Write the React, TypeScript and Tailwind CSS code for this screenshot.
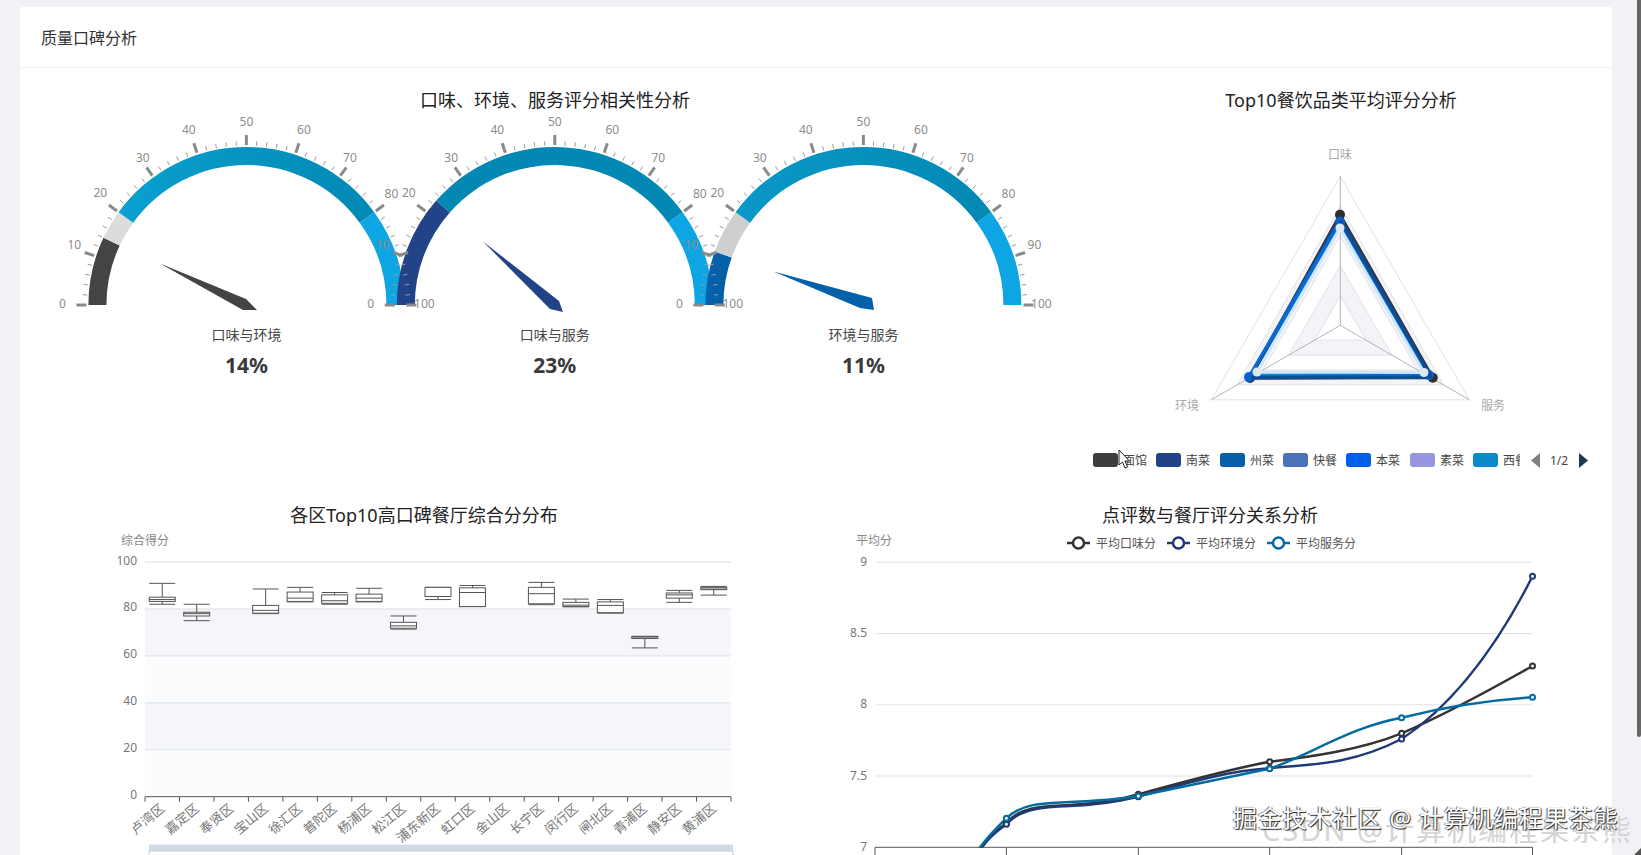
const FONT = "font-['Noto_Sans','Noto_Sans_CJK_SC',sans-serif]";

const pt = (cx: number, cy: number, r: number, v: number): [number, number] => {
  const a = Math.PI * (1 - v / 100);
  return [cx + r * Math.cos(a), cy - r * Math.sin(a)];
};

const arc = (cx: number, cy: number, from: number, to: number) => {
  const [x1, y1] = pt(cx, cy, 158, from);
  const [x2, y2] = pt(cx, cy, 158, to);
  const [x3, y3] = pt(cx, cy, 140, to);
  const [x4, y4] = pt(cx, cy, 140, from);
  return `M${x1} ${y1}A158 158 0 0 1 ${x2} ${y2}L${x3} ${y3}A140 140 0 0 0 ${x4} ${y4}Z`;
};

const CY = 305;

const gauges = [
  {
    cx: 246.4,
    value: 14,
    name: '口味与环境',
    color: '#444444',
    mid: '#dcdcdc',
    main: 'url(#gauge1)',
    needle: '160,263.5 246,299 257,310 243,310',
    hide90: true,
  },
  {
    cx: 554.8,
    value: 23,
    name: '口味与服务',
    color: '#234389',
    mid: '#234389',
    main: '#0288b3',
    needle: '483,241.5 559,301 563,312 550,309',
    hide90: true,
  },
  {
    cx: 863.4,
    value: 11,
    name: '环境与服务',
    color: '#0460a9',
    mid: '#cfcfcf',
    main: 'url(#gauge3)',
    needle: '773.5,271.5 872,298 874,310 860,308',
    hide90: false,
  },
];

const allTicks = Array.from({ length: 51 }, (_, i) => i * 2);

// nudges for the axis numbers, value -> dx, dy
const labelNudge: Record<number, [number, number]> = {
  0: [-1, -2],
  10: [2, -4],
  20: [2, -5],
  30: [4, 1],
  40: [-1, -1],
  50: [0, -1],
  60: [1, -1],
  70: [-4, 1],
  80: [-3, -4],
  90: [-3, -4],
  100: [-5, -2],
};

function Gauges() {
  return (
    <svg className="block" width={1070} height={377} viewBox="20 113 1070 377">
      <defs>
        <linearGradient id="gauge1" gradientUnits="userSpaceOnUse" x1="119" y1="0" x2="371" y2="0">
          <stop offset="0" stopColor="#0aa0d0" />
          <stop offset="1" stopColor="#0288b3" />
        </linearGradient>
        <linearGradient id="gauge3" gradientUnits="userSpaceOnUse" x1="736" y1="0" x2="990" y2="0">
          <stop offset="0" stopColor="#0a98c8" />
          <stop offset="1" stopColor="#0288b3" />
        </linearGradient>
      </defs>
      {gauges.map((g) => (
        <g key={g.name}>
          <path d={arc(g.cx, CY, 0, g.value)} fill={g.color} />
          {g.value < 20 && <path d={arc(g.cx, CY, g.value, 20)} fill={g.mid} />}
          <path d={arc(g.cx, CY, Math.max(20, g.value), 80)} fill={g.main} />
          <path d={arc(g.cx, CY, 80, 100)} fill="#0ea5e4" />
        </g>
      ))}
      {gauges.map((g) => (
        <g key={g.name}>
          {allTicks.map((v) => {
            const major = v % 10 === 0;
            const [x1, y1] = pt(g.cx, CY, major ? 160 : 159.5, v);
            const [x2, y2] = pt(g.cx, CY, major ? 170 : 164, v);
            return (
              <line
                key={v}
                x1={x1}
                y1={y1}
                x2={x2}
                y2={y2}
                stroke={major ? '#8a8a8a' : '#9a9a9a'}
                strokeWidth={major ? 3 : 1}
              />
            );
          })}
          {Array.from({ length: 11 }, (_, i) => i * 10).map((v) => {
            if (v === 90 && g.hide90) return null;
            const [x, y] = pt(g.cx, CY, 183, v);
            const [dx, dy] = labelNudge[v];
            return (
              <text key={v} x={x + dx} y={y + dy} fontSize={12} fill="#8c8c8c" textAnchor="middle" dominantBaseline="central">
                {v}
              </text>
            );
          })}
          <polygon points={g.needle} fill={g.color} />
          <text x={g.cx} y={334} fontSize={14} fill="#484848" textAnchor="middle" dominantBaseline="central">
            {g.name}
          </text>
          <text x={g.cx} y={365} fontSize={21} fontWeight={700} fill="#3a3a3a" textAnchor="middle" dominantBaseline="central">
            {g.value}%
          </text>
        </g>
      ))}
    </svg>
  );
}

const RCX = 1340.3;
const RCY = 325.3;
const RR = 149;
const ring = (k: number) => {
  const r = RR * k;
  const c = r * 0.866;
  return `${RCX},${RCY - r} ${RCX + c},${RCY + r / 2} ${RCX - c},${RCY + r / 2}`;
};

const radarSeries = [
  { color: '#0a8ac8', pts: '1340,224 1427,374 1252,375', dot: 0, dotColor: '' },
  { color: '#333333', pts: '1340,214.7 1432.8,377.7 1250,378', dot: 5, dotColor: '#2f2f2f' },
  { color: '#234389', pts: '1340,218 1431,377 1250,378', dot: 0, dotColor: '' },
  { color: '#0460a9', pts: '1340,220 1430,377 1249,377', dot: 0, dotColor: '' },
  { color: '#0a68d8', pts: '1340,222 1429,375 1249,377', dot: 5, dotColor: '#0a60d0' },
];

const radarLegend = [
  { x: 1093, color: '#3d3d3d', name: '面馆' },
  { x: 1156, color: '#234389', name: '南菜' },
  { x: 1220, color: '#0460a9', name: '州菜' },
  { x: 1283, color: '#4a72b8', name: '快餐' },
  { x: 1346, color: '#0060ec', name: '本菜' },
  { x: 1410, color: '#9696df', name: '素菜' },
  { x: 1473, color: '#0a8ac8', name: '西餐' },
];

function Radar() {
  return (
    <svg className="block" width={522} height={377} viewBox="1090 113 522 377">
      <defs>
        <clipPath id="legendClip">
          <rect x="1090" y="445" width="430" height="30" />
        </clipPath>
      </defs>
      <polygon points={ring(1)} fill="#ffffff" stroke="#dfe3ea" />
      <polygon points={ring(0.8)} fill="#f2f4f8" stroke="#dfe3ea" />
      <polygon points={ring(0.6)} fill="#ffffff" stroke="#dfe3ea" />
      <polygon points={ring(0.4)} fill="#f2f4f8" stroke="#dfe3ea" />
      <polygon points={ring(0.2)} fill="#ffffff" stroke="#dfe3ea" />
      <line x1={RCX} y1={RCY} x2={RCX} y2={RCY - RR} stroke="#b4b4b4" />
      <line x1={RCX} y1={RCY} x2={RCX + RR * 0.866} y2={RCY + RR / 2} stroke="#b4b4b4" />
      <line x1={RCX} y1={RCY} x2={RCX - RR * 0.866} y2={RCY + RR / 2} stroke="#b4b4b4" />
      {radarSeries.map((s) => (
        <g key={s.color}>
          <polygon points={s.pts} fill="none" stroke={s.color} strokeWidth={3} />
          {s.dot > 0 &&
            s.pts.split(' ').map((p) => {
              const [x, y] = p.split(',');
              return <circle key={p} cx={x} cy={y} r={s.dot} fill={s.dotColor} />;
            })}
        </g>
      ))}
      {/* right and bottom edges read darker than the left one */}
      <polyline points="1340,220 1431,377 1251,377.5" fill="none" stroke="#0a4f96" strokeWidth={3} />
      <polygon points="1340,228 1424,372.5 1257,372" fill="none" stroke="#cfe6f8" strokeWidth={3} />
      <circle cx={1340} cy={228} r={4.5} fill="#dce9f5" />
      <circle cx={1424} cy={372.5} r={4.5} fill="#dce9f5" />
      <circle cx={1257} cy={372} r={4.5} fill="#dce9f5" />
      <text x={1340} y={154} fontSize={12} fill="#aaaaaa" textAnchor="middle" dominantBaseline="central">口味</text>
      <text x={1187} y={405.5} fontSize={12} fill="#aaaaaa" textAnchor="middle" dominantBaseline="central">环境</text>
      <text x={1493} y={405.5} fontSize={12} fill="#aaaaaa" textAnchor="middle" dominantBaseline="central">服务</text>

      <g clipPath="url(#legendClip)">
        {radarLegend.map((l) => (
          <g key={l.name}>
            <rect x={l.x} y={453} width={25} height={14} rx={3} fill={l.color} />
            <text x={l.x + 30} y={460} fontSize={12} fill="#444444" dominantBaseline="central">{l.name}</text>
          </g>
        ))}
      </g>
      <polygon points="1540,453 1540,468 1531,460.5" fill="#808080" />
      <text x={1559} y={460} fontSize={12} fill="#444444" textAnchor="middle" dominantBaseline="central">1/2</text>
      <polygon points="1579,453 1579,468 1588,460.5" fill="#1a3a52" />
      <path d="M1119 450v15l3.5-3 2.5 6 2.5-1-2.5-6h4.5z" fill="#ffffff" stroke="#222222" strokeWidth={1} />
    </svg>
  );
}

const X0 = 145;
const X1 = 731;
const Y100 = 562;
const Y0 = 796.7;
const vy = (v: number) => Y0 - ((Y0 - Y100) * v) / 100;
const band = (X1 - X0) / 17;

const districts: { name: string; box?: number[] }[] = [
  { name: '卢湾区', box: [82, 83.2, 84, 85, 90.9] },
  { name: '嘉定区', box: [75, 77, 78, 78.6, 82] },
  { name: '奉贤区' },
  { name: '宝山区', box: [78, 78.2, 79.4, 81.5, 88.5] },
  { name: '徐汇区', box: [83, 83.2, 84.6, 87.2, 89.2] },
  { name: '普陀区', box: [82, 82.4, 83.5, 86, 87] },
  { name: '杨浦区', box: [83, 83.2, 84.6, 86.3, 88.8] },
  { name: '松江区', box: [71.4, 71.8, 72.8, 74.3, 77] },
  { name: '浦东新区', box: [84, 85.3, 85.3, 89.2, 89.2] },
  { name: '虹口区', box: [81, 81, 87, 89, 90] },
  { name: '金山区' },
  { name: '长宁区', box: [81.8, 82.2, 86.5, 89.2, 91.3] },
  { name: '闵行区', box: [80.9, 81, 81.6, 82.8, 84.2] },
  { name: '闸北区', box: [78.2, 78.4, 81.5, 83, 84] },
  { name: '青浦区', box: [63.4, 67.4, 68, 68.3, 68.3] },
  { name: '静安区', box: [82.8, 84.6, 86, 86.8, 87.9] },
  { name: '黄浦区', box: [85.9, 88.2, 88.5, 89.2, 89.6] },
];

function BoxChart() {
  return (
    <svg className="block" width={808} height={327} viewBox="20 528 808 327">
      <rect x={X0} y={vy(80)} width={X1 - X0} height={vy(60) - vy(80)} fill="#f4f6fa" />
      <rect x={X0} y={vy(60)} width={X1 - X0} height={vy(40) - vy(60)} fill="#fbfcfd" />
      <rect x={X0} y={vy(40)} width={X1 - X0} height={vy(20) - vy(40)} fill="#f4f6fa" />
      <rect x={X0} y={vy(20)} width={X1 - X0} height={vy(0) - vy(20)} fill="#fbfcfd" />
      <text x={145} y={540} fontSize={12} fill="#888888" textAnchor="middle" dominantBaseline="central">综合得分</text>
      {[100, 80, 60, 40, 20].map((v) => (
        <line key={v} x1={X0} x2={X1} y1={vy(v)} y2={vy(v)} stroke="#dcdfe6" />
      ))}
      {[100, 80, 60, 40, 20, 0].map((v) => (
        <text key={v} x={137} y={vy(v) - 2} fontSize={12} fill="#777777" textAnchor="end" dominantBaseline="central">{v}</text>
      ))}
      <line x1={X0} x2={X1} y1={Y0} y2={Y0} stroke="#555555" />
      {Array.from({ length: 18 }, (_, i) => i).map((i) => (
        <line key={i} x1={X0 + i * band} x2={X0 + i * band} y1={Y0} y2={Y0 + 5} stroke="#555555" />
      ))}
      {districts.map((d, i) => {
        const cx = X0 + (i + 0.5) * band;
        const [lo, q1, med, q3, hi] = d.box ?? [0, 0, 0, 0, 0];
        return (
          <g key={d.name}>
            {d.box && (
              <g stroke="#555555" fill="none">
                <line x1={cx - 13} x2={cx + 13} y1={vy(hi)} y2={vy(hi)} />
                <line x1={cx - 13} x2={cx + 13} y1={vy(lo)} y2={vy(lo)} />
                <line x1={cx} x2={cx} y1={vy(hi)} y2={vy(lo)} />
                <rect x={cx - 13} y={vy(q3)} width={26} height={vy(q1) - vy(q3)} fill="#ffffff" />
                <line x1={cx - 13} x2={cx + 13} y1={vy(med)} y2={vy(med)} />
              </g>
            )}
            <text
              x={cx}
              y={806}
              fontSize={13}
              fill="#777777"
              textAnchor="end"
              transform={`rotate(-40 ${cx} 806)`}
              dominantBaseline="central"
            >
              {d.name}
            </text>
          </g>
        );
      })}
      <rect x={149} y={844.5} width={584} height={7} fill="#d3dbe9" />
      <rect x={149} y={851} width={584} height={6} fill="#ffffff" stroke="#c4c9d2" />
    </svg>
  );
}

const lineTicks = [875, 1006.4, 1138.3, 1269.7, 1401.6, 1532.5];
const lineY = [
  { v: '9', y: 562.3 },
  { v: '8.5', y: 633.5 },
  { v: '8', y: 704.8 },
  { v: '7.5', y: 776 },
];

const lineSeries = [
  {
    name: '平均口味分',
    color: '#333333',
    lx: 1067,
    d: 'M980 850C988 838 996 830 1006.4 823.3C1020 806 1045 806 1070 805C1095 804 1120 800 1138.3 794.3C1180 783 1225 770 1269.7 761.7C1310 757 1360 750 1401.6 733.3C1445 715 1490 690 1532.5 666',
    ys: [823.3, 794.3, 761.7, 733.3, 666],
  },
  {
    name: '平均环境分',
    color: '#1f3a75',
    lx: 1167,
    d: 'M980 850C988 838 996 832 1006.4 824.3C1020 808 1045 807 1070 806C1095 805 1120 801 1138.3 796.7C1180 785 1225 771 1269.7 768.3C1300 764 1345 768 1401.6 739C1445 710 1490 660 1532.5 576.3',
    ys: [824.3, 796.7, 768.3, 739, 576.3],
  },
  {
    name: '平均服务分',
    color: '#046ba0',
    lx: 1267,
    d: 'M978 850C988 836 996 828 1006.4 818.3C1022 803 1045 803 1070 802C1095 801 1120 799 1138.3 796C1180 787 1225 778 1269.7 768.7C1310 755 1350 727 1401.6 717.7C1440 708 1490 700 1532.5 697.3',
    ys: [818.3, 796, 768.7, 717.7, 697.3],
  },
];

function LineChart() {
  return (
    <svg className="block" width={784} height={327} viewBox="828 528 784 327">
      <defs>
        <clipPath id="lineClip">
          <rect x="875" y="550" width="670" height="297.5" />
        </clipPath>
      </defs>
      <text x={874} y={540} fontSize={12} fill="#888888" textAnchor="middle" dominantBaseline="central">平均分</text>
      {lineSeries.map((s) => (
        <g key={s.name}>
          <line x1={s.lx} x2={s.lx + 23} y1={543} y2={543} stroke={s.color} strokeWidth={2.5} />
          <circle cx={s.lx + 11.5} cy={543} r={5.5} fill="#ffffff" stroke={s.color} strokeWidth={2.5} />
          <text x={s.lx + 29} y={543} fontSize={12} fill="#555555" dominantBaseline="central">{s.name}</text>
        </g>
      ))}
      {lineY.map((l) => (
        <g key={l.v}>
          <line x1={875} x2={1532.5} y1={l.y} y2={l.y} stroke="#dfe1e6" />
          <text x={867} y={l.y - 1} fontSize={12} fill="#777777" textAnchor="end" dominantBaseline="central">{l.v}</text>
        </g>
      ))}
      <text x={867} y={846} fontSize={12} fill="#777777" textAnchor="end" dominantBaseline="central">7</text>
      <line x1={875} x2={1532.5} y1={847.3} y2={847.3} stroke="#555555" />
      {lineTicks.map((x) => (
        <line key={x} x1={x} x2={x} y1={847.3} y2={855} stroke="#555555" />
      ))}
      <g clipPath="url(#lineClip)">
        {lineSeries.map((s) => (
          <path key={s.name} d={s.d} fill="none" stroke={s.color} strokeWidth={2.5} />
        ))}
      </g>
      {lineSeries.map((s) =>
        s.ys.map((y, i) => (
          <circle key={s.name + i} cx={lineTicks[i + 1]} cy={y} r={2.5} fill="#ffffff" stroke={s.color} strokeWidth={2} />
        )),
      )}
    </svg>
  );
}

function ChartTitle({ children, width }: { children: string; width?: string }) {
  return (
    <h3 className={`h-[25px] text-center text-[18px] leading-[25px] font-normal text-[#222222] ${width ?? ''}`}>
      {children}
    </h3>
  );
}

export default function App() {
  return (
    <div className={`relative h-[855px] w-[1641px] overflow-hidden bg-[#f0f2f7] pt-[7px] pl-[20px] ${FONT}`}>
      <div className="h-[848px] w-[1592px] overflow-hidden rounded-t-[2px] bg-white">
        {/* Header */}
        <div className="flex h-[61px] items-center border-b border-[#f0f0f0] pt-[2px] pl-[21px] text-[16px] text-[#333333]">
          质量口碑分析
        </div>

        {/* Top charts */}
        <div className="mt-[20px] grid grid-cols-[1070px_522px]">
          <div>
            <ChartTitle>口味、环境、服务评分相关性分析</ChartTitle>
            <Gauges />
          </div>
          <div>
            <ChartTitle width="w-[502px]">Top10餐饮品类平均评分分析</ChartTitle>
            <Radar />
          </div>
        </div>

        {/* Bottom charts */}
        <div className="mt-[13px] grid grid-cols-[808px_784px]">
          <div>
            <ChartTitle>各区Top10高口碑餐厅综合分分布</ChartTitle>
            <BoxChart />
          </div>
          <div>
            <ChartTitle width="w-[764px]">点评数与餐厅评分关系分析</ChartTitle>
            <LineChart />
          </div>
        </div>
      </div>

      {/* Scrollbar */}
      <div className="absolute top-0 right-0 h-[737px] w-[4px] rounded-b-[2px] bg-[#666666]" />
      <div className="absolute right-0 bottom-0 h-0 w-0 border-b-[7px] border-l-[7px] border-b-[#555555] border-l-transparent" />

      {/* Watermarks */}
      <div className="absolute top-[812px] left-[1262px] text-[29px] leading-[36px] tracking-[2px] whitespace-nowrap text-[#d4d4d4]">
        CSDN @计算机编程果茶熊
      </div>
      <div className="absolute top-[802px] left-[1233px] text-[24px] leading-[32px] tracking-[0.9px] whitespace-pre text-white [text-shadow:1px_1px_1px_#222,-1px_0_1px_#555]">
        掘金技术社区 @ 计算机编程果茶熊
      </div>
    </div>
  );
}
